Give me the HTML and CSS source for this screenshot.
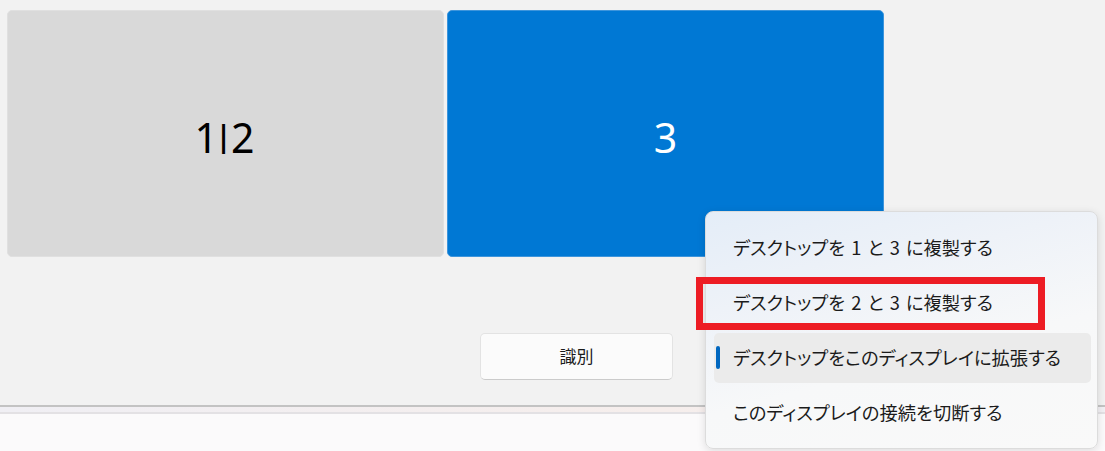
FILE: index.html
```html
<!DOCTYPE html>
<html>
<head>
  <title>ディスプレイ</title>
  <link rel="stylesheet" href="styles.css">
</head>
<body>
  <div class="display-area">
    <div class="monitors">
      <div class="monitor mon-dup">1<span class="sep">|</span>2</div>
      <div class="monitor mon-main">3</div>
    </div>
    <div class="actions">
      <button class="btn-identify">識別</button>
    </div>
  </div>
  <div class="divider"></div>
  <div class="below"></div>

  <div class="display-menu">
    <div class="menu-item">デスクトップを 1 と 3 に複製する</div>
    <div class="menu-item"><span class="mark-box"></span>デスクトップを 2 と 3 に複製する</div>
    <div class="menu-item selected"><span class="sel-bar"></span>デスクトップをこのディスプレイに拡張する</div>
    <div class="menu-item">このディスプレイの接続を切断する</div>
  </div>
</body>
</html>
```

FILE: styles.css
```css
body {
  margin: 0;
  background-color: #fbfafb;
  font-family: "Noto Sans", "Noto Sans CJK JP", sans-serif;
  color: #1b1b1b;
  position: relative;
  height: 451px;
  overflow: hidden;
}

.display-area {
  height: 405px;
  box-sizing: border-box;
  padding: 10px 0 0 7px;
  background-color: #f2f2f2;
}

.monitors {
  display: flex;
  gap: 3px;
}

.monitor {
  width: 437px;
  height: 247px;
  box-sizing: border-box;
  border-radius: 5px;
  display: flex;
  align-items: center;
  justify-content: center;
  font-size: 41px;
  padding-top: 6px;
}

.mon-dup {
  background-color: #d9d9d9;
  border: 1px solid #e0e0e0;
  color: #000;
  padding-right: 2px;
}

.sep {
  font-size: 31px;
  font-weight: 600;
  position: relative;
  top: -2px;
  margin: 0 -1px 0 -3px;
}

.mon-main {
  background-color: #0078d4;
  border: 1px solid #3d95dc;
  color: #fff;
}

.actions {
  margin-top: 76px;
  padding-left: 473px;
}

.btn-identify {
  width: 193px;
  height: 47px;
  background-color: #fbfbfb;
  border: 1px solid #e3e3e3;
  border-bottom-color: #cbcbcb;
  border-radius: 5px;
  font-family: "Noto Sans CJK JP", sans-serif;
  font-size: 17px;
  color: #1b1b1b;
  padding: 0 0 2px 0;
}

.divider {
  height: 5px;
  border-top: 2px solid #c3c3c3;
  border-bottom: 2px solid #e3e1e4;
  background: linear-gradient(90deg, #f0eff4, #f6eeec 60%, #f2f0f4);
}

.below {
  height: 40px;
}

.display-menu {
  position: absolute;
  left: 705px;
  top: 211px;
  width: 393px;
  height: 238px;
  box-sizing: border-box;
  padding: 11px 6px 10px 8px;
  border: 1px solid #dcdcdc;
  border-radius: 8px;
  background: linear-gradient(165deg, #e4edf8 0%, #eef2f8 30%, #f7f8f9 60%, #f9f9f9 100%);
  box-shadow: 0 2px 8px rgba(0, 0, 0, 0.12);
  display: flex;
  flex-direction: column;
  gap: 5px;
  font-family: "Noto Sans CJK JP", sans-serif;
  font-feature-settings: "palt";
  font-size: 18.3px;
}

.menu-item {
  height: 50px;
  display: flex;
  align-items: center;
  padding-left: 19px;
  position: relative;
  border-radius: 5px;
  padding-bottom: 2px;
  box-sizing: border-box;
  word-spacing: 2px;
}

.menu-item.selected {
  background-color: #ebebeb;
}

.sel-bar {
  position: absolute;
  left: 2px;
  top: 13px;
  width: 4px;
  height: 23px;
  border-radius: 2px;
  background-color: #0067c0;
}

.mark-box {
  position: absolute;
  left: -18px;
  top: -1px;
  width: 349px;
  height: 53px;
  box-sizing: border-box;
  border: 7px solid #ed1c24;
}
```
